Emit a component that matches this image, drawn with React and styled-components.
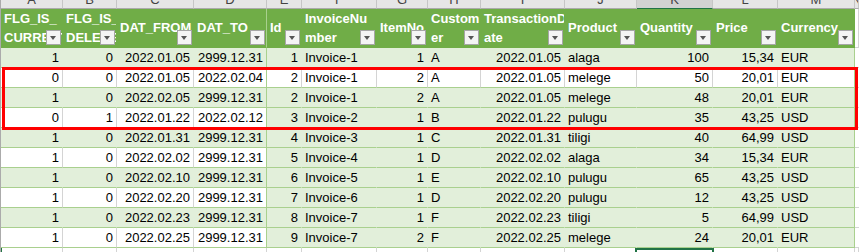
import React from 'react'
import styled, { createGlobalStyle, css } from 'styled-components'

const GlobalStyle = createGlobalStyle`
	html, body {
		margin: 0;
		padding: 0;
		background: #ffffff;
	}
	body {
		font-family: 'Liberation Sans', Arial, sans-serif;
		overflow: hidden;
	}
`

const COLS = '62px 54px 77px 73px 35px 75px 51px 53px 84px 72px 76px 65px 77px 1fr'

const GREEN = '#e2efda'
const LINE = '#a9d08e'
const GRID = '#d4d4d4'

const Sheet = styled.div`
	position: relative;
	width: 859px;
	height: 252px;
	overflow: hidden;
	border-left: 1px solid #ababab;
	box-sizing: border-box;
`

const Row = styled.div`
	display: grid;
	grid-template-columns: ${COLS};
	height: ${p => p.$height}px;
`

const Letter = styled.div`
	box-sizing: border-box;
	height: 9px;
	background: ${p => (p.$selected ? '#d2d2d2' : '#e6e6e6')};
	border-right: 1px solid #c6c6c6;
	border-bottom: ${p => (p.$selected ? '1px solid #217346' : '1px solid #ababab')};
	display: flex;
	align-items: flex-end;
	justify-content: center;
	overflow: hidden;
	font-size: 13px;
	color: #444444;

	span {
		display: block;
		height: 14px;
		line-height: 14px;
		margin-bottom: 1px;
		flex-shrink: 0;
	}
`

const HeadCell = styled.div`
	position: relative;
	box-sizing: border-box;
	height: 39px;
	background: ${p => (p.$blank ? '#ffffff' : '#70ad47')};
	border-right: 1px solid ${p => (p.$blank ? GRID : p.$edge ? '#a9d08e' : '#70ad47')};
	border-bottom: 1px solid ${p => (p.$blank ? GRID : '#70ad47')};
	padding-left: 3px;
	display: flex;
	flex-direction: column;
	justify-content: center;
	overflow: hidden;
	color: #ffffff;
	font-weight: bold;
	font-size: 13px;
	line-height: 19.5px;

	span {
		white-space: nowrap;
	}
`

const FilterButton = styled.span`
	position: absolute;
	right: 1px;
	bottom: 2px;
	width: 15px;
	height: 15px;
	box-sizing: border-box;
	background: #f4f4f4;
	border: 1px solid #a6a6a6;

	&::after {
		content: '';
		position: absolute;
		left: 3px;
		top: 5px;
		border-left: 3.5px solid transparent;
		border-right: 3.5px solid transparent;
		border-top: 4px solid #555555;
	}
`

const cellColors = ({ $fill, $edge, $blank }) => {
	if ($blank)
		return css`
			background: #ffffff;
			border-right: 1px solid ${GRID};
			border-bottom: 1px solid ${GRID};
		`
	return css`
		background: ${$fill ? GREEN : '#ffffff'};
		border-right: 1px solid ${$edge ? LINE : $fill ? GREEN : GRID};
		border-bottom: 1px solid ${LINE};
	`
}

const Cell = styled.div`
	position: relative;
	box-sizing: border-box;
	height: 20px;
	padding: 0 3px;
	display: flex;
	align-items: center;
	justify-content: ${p => (p.$num ? 'flex-end' : 'flex-start')};
	font-size: 13px;
	color: #000000;
	white-space: nowrap;
	${cellColors}
`

const EmptyCell = styled.div`
	position: relative;
	box-sizing: border-box;
	height: 20px;
	border-right: 1px solid ${GRID};
	border-left: ${p => (p.$marker ? '2px solid #217346' : 'none')};
	margin-left: ${p => (p.$marker ? '-1px' : '0')};

	${p =>
		p.$active &&
		css`
			&::after {
				content: '';
				position: absolute;
				top: 0;
				left: -2px;
				right: -2px;
				height: 20px;
				border: 2px solid #217346;
			}
		`}
`

const Highlight = styled.div`
	position: absolute;
	left: 1px;
	top: 67px;
	width: 856px;
	height: 63px;
	box-sizing: border-box;
	border: 3px solid #ff0000;
	pointer-events: none;
`

const letters = 'ABCDEFGHIJKLMN'.split('')

const headers = [
	['FLG_IS_', 'CURRENT'],
	['FLG_IS_', 'DELETED'],
	['DAT_FROM'],
	['DAT_TO'],
	['Id'],
	['InvoiceNu', 'mber'],
	['ItemNo'],
	['Custom', 'er'],
	['TransactionD', 'ate'],
	['Product'],
	['Quantity'],
	['Price'],
	['Currency'],
]

const numeric = [true, true, true, true, true, false, true, false, true, false, true, true, false]

const rows = [
	['1', '0', '2022.01.05', '2999.12.31', '1', 'Invoice-1', '1', 'A', '2022.01.05', 'alaga', '100', '15,34', 'EUR'],
	['0', '0', '2022.01.05', '2022.02.04', '2', 'Invoice-1', '2', 'A', '2022.01.05', 'melege', '50', '20,01', 'EUR'],
	['1', '0', '2022.02.05', '2999.12.31', '2', 'Invoice-1', '2', 'A', '2022.01.05', 'melege', '48', '20,01', 'EUR'],
	['0', '1', '2022.01.22', '2022.02.12', '3', 'Invoice-2', '1', 'B', '2022.01.22', 'pulugu', '35', '43,25', 'USD'],
	['1', '0', '2022.01.31', '2999.12.31', '4', 'Invoice-3', '1', 'C', '2022.01.31', 'tiligi', '40', '64,99', 'USD'],
	['1', '0', '2022.02.02', '2999.12.31', '5', 'Invoice-4', '1', 'D', '2022.02.02', 'alaga', '34', '15,34', 'EUR'],
	['1', '0', '2022.02.10', '2999.12.31', '6', 'Invoice-5', '1', 'E', '2022.02.10', 'pulugu', '65', '43,25', 'USD'],
	['1', '0', '2022.02.20', '2999.12.31', '7', 'Invoice-6', '1', 'D', '2022.02.20', 'pulugu', '12', '43,25', 'USD'],
	['1', '0', '2022.02.23', '2999.12.31', '8', 'Invoice-7', '1', 'F', '2022.02.23', 'tiligi', '5', '64,99', 'USD'],
	['1', '0', '2022.02.25', '2999.12.31', '9', 'Invoice-7', '2', 'F', '2022.02.25', 'melege', '24', '20,01', 'EUR'],
]

// first table (A-D) is banded, second (E-M) is filled except its 2nd row
const isFilled = (rowIdx, colIdx) => (colIdx < 4 ? rowIdx % 2 === 0 : rowIdx !== 1)

export default function App() {
	return (
		<>
			<GlobalStyle />
			<Sheet>
				<Row $height={9}>
					{letters.map(l => (
						<Letter key={l} $selected={l === 'K'}>
							<span>{l}</span>
						</Letter>
					))}
				</Row>
				<Row $height={39}>
					{headers.map((lines, i) => (
						<HeadCell key={i} $edge={i === 3}>
							{lines.map(t => (
								<span key={t}>{t}</span>
							))}
							<FilterButton />
						</HeadCell>
					))}
					<HeadCell $blank />
				</Row>
				{rows.map((r, ri) => (
					<Row key={ri} $height={20}>
						{r.map((v, ci) => (
							<Cell
								key={ci}
								$num={numeric[ci]}
								$fill={isFilled(ri, ci)}
								$edge={ci === 3 || ci === 12}
							>
								{v}
							</Cell>
						))}
						<Cell $blank />
					</Row>
				))}
				<Row $height={20}>
					{letters.map((l, i) => (
						<EmptyCell key={l} $marker={i === 0} $active={l === 'K'} />
					))}
				</Row>
				<Highlight />
			</Sheet>
		</>
	)
}
